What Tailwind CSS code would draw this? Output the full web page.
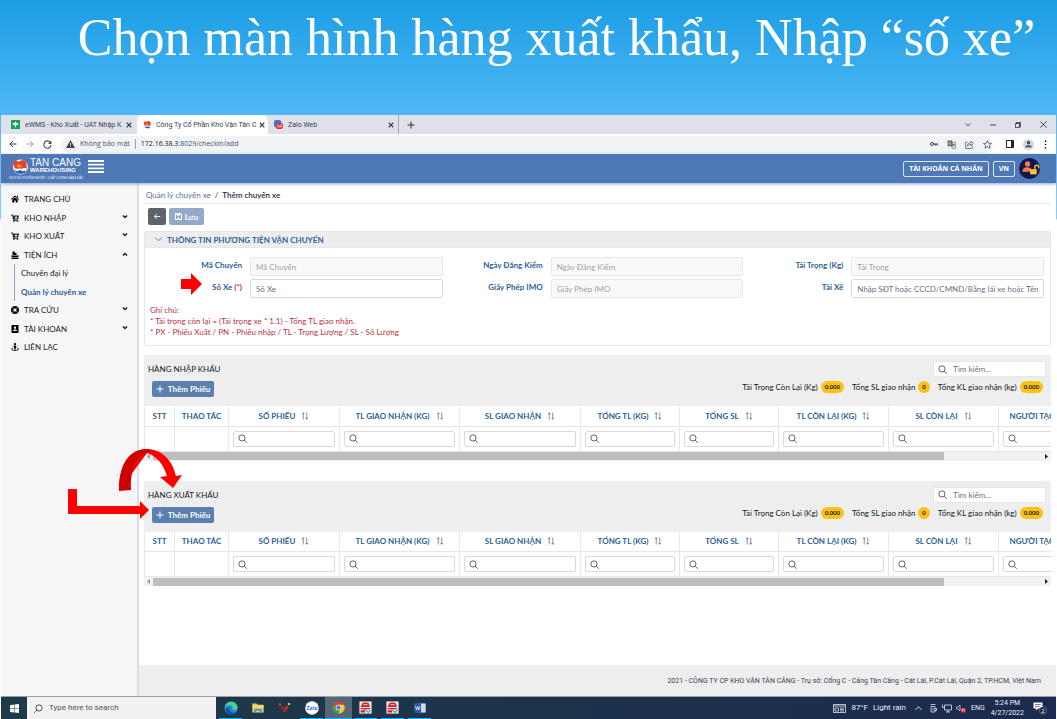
<!DOCTYPE html>
<html lang="vi">
<head>
    <meta charset="UTF-8">
    <meta name="viewport" content="width=device-width, initial-scale=1.0">
    <title>Thêm chuyến xe - Tan Cang Warehousing</title>
    <script src="https://cdn.jsdelivr.net/npm/@tailwindcss/browser@4"></script>
</head>
<body class="bg-white font-[Lato,'Noto_Sans',sans-serif] text-[8px] leading-[10px] text-gray-800">
    <!-- Shared icons -->
    <svg class="hidden">
        <symbol id="search" viewBox="0 0 16 16"><g fill="none" stroke="currentColor" stroke-width="1.6"><circle cx="7" cy="7" r="5.500"/><path d="M11 11 15.500 15.500"/></g></symbol>
        <symbol id="sort" viewBox="0 0 16 16"><path d="M4.5 15V1.500M2 4l2.500-2.500L7 4M11.500 1v13.500M9 12l2.500 2.500L14 12" fill="none" stroke="currentColor" stroke-width="1.300"/></symbol>
        <symbol id="down" viewBox="0 0 16 16"><path d="M2 4l6 6 6-6" fill="none" stroke="currentColor" stroke-width="2.200"/></symbol>
        <symbol id="caret" viewBox="0 0 16 16"><path d="M2.500 4L8 9.500 13.500 4" fill="none" stroke="currentColor" stroke-width="4"/></symbol>
        <symbol id="close" viewBox="0 0 16 16"><path d="M2 2l12 12M14 2L2 14" fill="none" stroke="currentColor" stroke-width="3"/></symbol>
        <symbol id="back" viewBox="0 0 16 16"><path d="M15 8H2M8 2L2 8l6 6" fill="none" stroke="currentColor" stroke-width="2"/></symbol>
        <symbol id="cart" viewBox="0 0 16 16"><path d="M0 1h3.500l.5 2h12l-1.500 8H5.500L6 12.500h8.500V14H4.500L2.500 3H0z" fill="currentColor"/><path d="M9.200 4.500h1.800v1.800h1.800V8H11v1.800H9.200V8H7.400V6.300h1.800z" fill="#f6f6f6"/><circle cx="6" cy="14.500" r="1.500" fill="currentColor"/><circle cx="13" cy="14.500" r="1.500" fill="currentColor"/></symbol>
        <symbol id="brand" viewBox="0 0 32 32"><circle cx="16" cy="17" r="14" fill="#fff"/><path d="M3 21a14 14 0 0 0 26 0l-7 3-6-2-6 3z" fill="#2b62b4"/><path d="M4 23l9-2 8 3 7-1" fill="none" stroke="#fff" stroke-width="1.500"/><path d="M2 9c6-7 9 0 14-4 5-3 9 1 11 4l1 11c-4-3-8 1-12 0-5-1-8 2-11-1z" fill="#e8402f"/><path d="M9 13l4-2 2 3 4-1-2 3 1 2-4-1-3 1z" fill="#f9a51a"/></symbol>
        <symbol id="redapp" viewBox="0 0 32 32"><path d="M1 1h30v30H1z" fill="#f4e4e4"/><path d="M4 15 8 6c3-3 13-3 16 0l3 9z" fill="#d81e28"/><path d="M11 9h10" stroke="#fff" stroke-width="2"/><path d="M4 17h23v3H4zM4 23h11v5H4z" fill="#d81e28"/><path d="M14 20l9 8 5-6" fill="none" stroke="#39a7c9" stroke-width="3"/></symbol>
    </svg>

    <div class="relative min-h-screen flex flex-col bg-[linear-gradient(#1b9de5,#57bcf6_130px,#7fd0fb_219px,#fff_220px)]">
        <h1 class="h-[115px] pl-14 pt-2 text-center font-['Liberation_Serif',serif] text-[52px] leading-[60px] text-white whitespace-nowrap">Chọn màn hình hàng xuất khẩu, Nhập “số xe”</h1>

        <div class="flex-1 mx-px flex flex-col bg-white">
            <!-- Browser tabs -->
            <div class="h-[19px] flex items-center bg-[#dee1e8] font-[Roboto,sans-serif] text-[7px] text-gray-700">
                <div class="w-[136px] h-full pl-[10px] pr-[5px] flex items-center gap-[5px]">
                    <svg class="w-[9px] h-[9px] shrink-0" viewBox="0 0 16 16"><path d="M0 0h16v16H0z" fill="#12a05c"/><path d="M3 7h10M8 3v10" stroke="#fff" stroke-width="2.500"/></svg>
                    <span class="flex-1 min-w-0 whitespace-nowrap">eWMS - Kho Xuất - UAT Nhập K</span>
                    <svg class="w-[6px] h-[6px] shrink-0"><use href="#close"/></svg>
                </div>
                <div class="w-[131px] h-full pl-[6px] pr-[3px] flex items-center gap-1 rounded-t-md bg-white">
                    <svg class="w-[9px] h-[9px] shrink-0"><use href="#brand"/></svg>
                    <span class="flex-1 min-w-0 whitespace-nowrap">Công Ty Cổ Phần Kho Vận Tân C</span>
                    <svg class="w-[6px] h-[6px] shrink-0"><use href="#close"/></svg>
                </div>
                <div class="w-[131px] h-full pl-[6px] pr-1 flex items-center gap-[5px] border-r border-gray-500/50">
                    <svg class="w-[9px] h-[9px] shrink-0" viewBox="0 0 16 16"><rect width="13" height="13" rx="4" fill="#2a7de1"/><rect x="3" y="5" width="13" height="11" rx="5" fill="#e02f2f"/><path d="M6 9h3M11 9h3M6 12h8" stroke="#fff" stroke-width="1.500"/></svg>
                    <span class="flex-1">Zalo Web</span>
                    <svg class="w-[6px] h-[6px] shrink-0"><use href="#close"/></svg>
                </div>
                <svg class="ml-2 w-[8px] h-[8px]" viewBox="0 0 16 16"><path d="M8 1v14M1 8h14" stroke="#333" stroke-width="2"/></svg>
                <div class="ml-auto pr-[9px] flex items-center gap-[19px] text-gray-900">
                    <svg class="w-[6px] h-[6px]"><use href="#down"/></svg>
                    <svg class="w-[6px] h-[6px]" viewBox="0 0 16 16"><path d="M0 8h16" stroke="currentColor" stroke-width="2"/></svg>
                    <svg class="w-[6px] h-[6px]" viewBox="0 0 16 16"><path d="M1 4h11v11H1zM4 4V1h11v11h-3" fill="none" stroke="currentColor" stroke-width="2"/></svg>
                    <svg class="w-[7px] h-[7px]" viewBox="0 0 16 16"><path d="M1 1l14 14M15 1L1 15" stroke="currentColor" stroke-width="1.800"/></svg>
                </div>
            </div>

            <!-- Address bar -->
            <div class="h-[20px] px-2 flex items-center gap-[9px] font-['Open_Sans',sans-serif] text-[7px] text-gray-700">
                <svg class="w-[8px] h-[8px]"><use href="#back"/></svg>
                <svg class="w-[8px] h-[8px] rotate-180 text-gray-400"><use href="#back"/></svg>
                <svg class="w-[9px] h-[9px]" viewBox="0 0 16 16"><path d="M13.500 4.500A6.500 6.500 0 1 0 14.500 9" fill="none" stroke="currentColor" stroke-width="1.800"/><path d="M15 1v6H9z" fill="currentColor"/></svg>
                <div class="flex-1 h-[17px] pl-[5px] pr-px flex items-center rounded-full bg-[#f1f3f4]">
                    <svg class="w-[9px] h-[8px] mr-[5px]" viewBox="0 0 16 14"><path d="M8 0l8 14H0z" fill="#444"/><path d="M8 5v4M8 10.500v1.500" stroke="#fff" stroke-width="1.500"/></svg>
                    <span class="pr-[5px] border-r border-gray-400 text-gray-600">Không bảo mật</span>
                    <span class="pl-[5px] text-gray-600"><span class="text-gray-900">172.16.38.3</span>:8029/checkin/add</span>
                    <span class="ml-auto flex items-center gap-[9px]">
                        <svg class="w-[8px] h-[8px]" viewBox="0 0 16 16"><circle cx="4" cy="8" r="3" fill="none" stroke="currentColor" stroke-width="2"/><path d="M7 8h9M11 8v3M14.500 8v3" stroke="currentColor" stroke-width="2"/></svg>
                        <svg class="w-[9px] h-[9px]" viewBox="0 0 16 16"><path d="M1 1h8l2 10H1z" fill="#666"/><path d="M8 4h7v11H9l-1-4M10 8h4M12 7v1c0 2-1 3-2 4M11 9l3 3" fill="none" stroke="#666" stroke-width="1.200"/><path d="M7 4.500A2 2 0 1 0 7 7H5.500" fill="none" stroke="#fff"/></svg>
                        <svg class="w-[9px] h-[9px]" viewBox="0 0 16 16"><path d="M5 4H1v11h12v-4M4 11c0-4 3-6 7-6V2l4 4.500-4 4V8c-3 0-5 1-7 3z" fill="none" stroke="currentColor" stroke-width="1.200"/></svg>
                        <svg class="w-[9px] h-[9px]" viewBox="0 0 16 16"><path d="M8 1l2.100 4.700 5 .5-3.800 3.300 1.100 5L8 11.900 3.600 14.500l1.100-5L.9 6.200l5-.5z" fill="none" stroke="currentColor" stroke-width="1.300"/></svg>
                    </span>
                </div>
                <svg class="ml-1 w-[8px] h-[8px]" viewBox="0 0 16 16"><path d="M1 1h14v14H1z" fill="none" stroke="#222" stroke-width="2"/><path d="M10 1h5v14h-5z" fill="#222"/></svg>
                <svg class="w-[11px] h-[11px]" viewBox="0 0 16 16"><circle cx="8" cy="8" r="8" fill="#d3d7de"/><circle cx="8" cy="5.500" r="2.500" fill="#3d4a5c"/><path d="M3 12c0-4 10-4 10 0z" fill="#3d4a5c"/></svg>
                <svg class="w-[5px] h-[9px]" viewBox="0 0 8 16"><circle cx="4" cy="2" r="1.400"/><circle cx="4" cy="8" r="1.400"/><circle cx="4" cy="14" r="1.400"/></svg>
            </div>

            <!-- App header -->
            <header class="relative h-[29px] px-2 flex items-center bg-[#4f78b6] text-white shadow-[0_1px_3px_#8fa5cf]">
                <a href="#" class="block w-[74px]">
                    <span class="flex items-center gap-px pl-[3px]">
                        <svg class="w-[17px] h-[17px]"><use href="#brand"/></svg>
                        <span class="block font-['Liberation_Sans',sans-serif]">
                            <span class="block text-[10px] leading-[8px] whitespace-nowrap">TAN CANG</span>
                            <span class="block text-[6px] leading-[7px] font-bold">WAREHOUSING</span>
                        </span>
                    </span>
                    <span class="block pt-px text-[3px] leading-[4px] font-['Open_Sans',sans-serif] whitespace-nowrap">DỊCH VỤ CHUYÊN NGHIỆP - CHẤT LƯỢNG HÀNG ĐẦU</span>
                </a>
                <button class="self-start mt-[6px] ml-[5px]" aria-label="Menu">
                    <svg class="w-[16px] h-[13px]" viewBox="0 0 16 13"><path d="M0 1h16M0 4.700h16M0 8.300h16M0 12h16" stroke="#fff" stroke-width="1.800"/></svg>
                </button>
                <div class="ml-auto pr-2 flex items-center gap-1 font-['Open_Sans',sans-serif] text-[7px]">
                    <button class="h-[16px] px-[5px] border border-white/80 rounded-[2px] font-bold">TÀI KHOẢN CÁ NHÂN</button>
                    <button class="h-[16px] px-[5px] border border-white/80 rounded-[2px] font-bold">VN</button>
                    <svg class="w-[21px] h-[21px]" viewBox="0 0 32 32"><circle cx="16" cy="16" r="16" fill="#12184c"/><circle cx="13" cy="9" r="4" fill="#f47b50"/><path d="M5 21c0-9 15-9 15 0z" fill="#f47b50"/><path d="M17 17h10v8H17z" fill="#fbc53a"/><path d="M24 17v-3c0-4 6-4 6 0v2" fill="none" stroke="#fbc53a" stroke-width="2"/></svg>
                </div>
            </header>

            <div class="flex-1 flex">
                <!-- Sidebar -->
                <nav class="w-[138px] shrink-0 pt-[7px] pl-[10px] pr-[9px] bg-[#f6f6f6] border-r-2 border-[#dcdde8] text-[#222]">
                    <a href="#" class="h-[18px] flex items-center gap-[5px]">
                        <svg class="w-[8px] h-[8px]" viewBox="0 0 16 16"><path d="M8 1l8 7-1 1.500L8 3.500 1 9.500 0 8zM12 1h2v4l-2-2zM2.500 9.500L8 5l5.500 4.500V15H9.500v-4h-3v4h-4z"/></svg>
                        TRANG CHỦ
                    </a>
                    <a href="#" class="h-[19px] flex items-center gap-[5px]">
                        <svg class="w-[8px] h-[8px]"><use href="#cart"/></svg>
                        KHO NHẬP
                        <svg class="ml-auto mb-[2px] w-[6px] h-[6px]"><use href="#caret"/></svg>
                    </a>
                    <a href="#" class="h-[18px] flex items-center gap-[5px]">
                        <svg class="w-[8px] h-[8px]"><use href="#cart"/></svg>
                        KHO XUẤT
                        <svg class="ml-auto mb-[2px] w-[6px] h-[6px]"><use href="#caret"/></svg>
                    </a>
                    <a href="#" class="h-[19px] flex items-center gap-[5px]">
                        <svg class="w-[8px] h-[8px]" viewBox="0 0 16 16"><path d="M3 1h5v3h3v4H3zM0 9h16l-2 4H2zM1 14h14v2H1z"/></svg>
                        TIỆN ÍCH
                        <svg class="ml-auto mb-[2px] w-[6px] h-[6px] rotate-180"><use href="#caret"/></svg>
                    </a>
                    <div class="ml-[3px] pl-[6px] border-l border-gray-400">
                        <a href="#" class="h-[18px] flex items-center">Chuyến đại lý</a>
                        <a href="#" class="h-[19px] flex items-center font-bold text-[#275a93]">Quản lý chuyến xe</a>
                    </div>
                    <a href="#" class="h-[18px] flex items-center gap-[5px]">
                        <svg class="w-[8px] h-[8px]" viewBox="0 0 16 16"><circle cx="8" cy="8" r="5.500" fill="none" stroke="#111" stroke-width="5"/><path d="M3 3l2 2M13 3l-2 2M3 13l2-2M13 13l-2-2" stroke="#f6f6f6" stroke-width="1.500"/></svg>
                        TRA CỨU
                        <svg class="ml-auto mb-[2px] w-[6px] h-[6px]"><use href="#caret"/></svg>
                    </a>
                    <a href="#" class="h-[19px] flex items-center gap-[5px]">
                        <svg class="w-[8px] h-[8px]" viewBox="0 0 16 16"><rect x="1" width="14" height="16" rx="1.500"/><circle cx="8" cy="5.500" r="2.300" fill="#f6f6f6"/><path d="M4 12c0-4 8-4 8 0z" fill="#f6f6f6"/></svg>
                        TÀI KHOẢN
                        <svg class="ml-auto mb-[2px] w-[6px] h-[6px]"><use href="#caret"/></svg>
                    </a>
                    <a href="#" class="h-[18px] flex items-center gap-[5px]">
                        <svg class="w-[8px] h-[8px]" viewBox="0 0 16 16"><circle cx="8" cy="2.200" r="2.200"/><path d="M5.500 5h5v4h-1v4h-3V9h-1z"/><path d="M4 10c-6 2-2 5 4 5s10-3 4-5" fill="none" stroke="#111" stroke-width="1.800"/></svg>
                        LIÊN LẠC
                    </a>
                </nav>

                <main class="flex-1 min-w-0 flex flex-col">
                    <div class="flex-1 pl-[5px] pr-[5px]">
                        <div class="h-[21px] pl-[2px] pt-[7px] flex gap-1 border-b border-gray-200">
                            <a href="#" class="text-[#55708f]">Quản lý chuyến xe</a>
                            <span>/</span>
                            <span class="font-semibold">Thêm chuyến xe</span>
                        </div>
                        <div class="pt-1 pl-1 flex gap-[3px]">
                            <button class="w-[18px] h-[17px] flex items-center justify-center rounded-[2px] bg-[#5d6369] text-white" aria-label="Quay lại">
                                <svg class="w-[8px] h-[7px]"><use href="#back"/></svg>
                            </button>
                            <button class="w-[35px] h-[17px] flex items-center justify-center gap-[3px] rounded-[2px] bg-[#94a9c9] text-white font-bold">
                                <svg class="w-[7px] h-[7px]" viewBox="0 0 16 16"><path d="M1 1h11l3 3v11H1z" fill="none" stroke="#fff" stroke-width="2.500"/><path d="M4 2h7v4H4zM6 10h4v4H6z" fill="#fff"/></svg>
                                Lưu
                            </button>
                        </div>

                        <!-- Vehicle information -->
                        <section class="mt-[6px] h-[115px] border border-gray-200 rounded-[2px]">
                            <h2 class="h-[16px] pl-[10px] flex items-center gap-[5px] bg-[#ededed] border-b border-gray-200 font-bold text-[#2f6095]">
                                <svg class="w-[7px] h-[7px]" viewBox="0 0 16 16"><path d="M1 4l7 7 7-7" fill="none" stroke="currentColor" stroke-width="1.800"/></svg>
                                THÔNG TIN PHƯƠNG TIỆN VẬN CHUYỂN
                            </h2>
                            <div class="grid grid-cols-3 gap-y-[3px] pt-[9px] pl-[3px]">
                                <div class="flex gap-2 pr-[6px]">
                                    <label for="maChuyen" class="w-[94px] pt-[3px] text-right font-bold text-[#2f6095]">Mã Chuyến</label>
                                    <input id="maChuyen" disabled placeholder="Mã Chuyến" class="flex-1 min-w-0 h-[19px] px-[5px] border border-gray-200 rounded-[2px] bg-[#f9f9f9] placeholder:text-gray-400">
                                </div>
                                <div class="flex gap-2 pr-[6px]">
                                    <label for="dangKiem" class="w-[94px] pt-[3px] text-right font-bold text-[#2f6095]">Ngày Đăng Kiểm</label>
                                    <input id="dangKiem" disabled placeholder="Ngày Đăng Kiểm" class="flex-1 min-w-0 h-[19px] px-[5px] border border-gray-200 rounded-[2px] bg-[#f9f9f9] placeholder:text-gray-400">
                                </div>
                                <div class="flex gap-2 pr-[6px]">
                                    <label for="taiTrong" class="w-[94px] pt-[3px] text-right font-bold text-[#2f6095]">Tải Trọng (Kg)</label>
                                    <input id="taiTrong" disabled placeholder="Tải Trọng" class="flex-1 min-w-0 h-[19px] px-[5px] border border-gray-200 rounded-[2px] bg-[#f9f9f9] placeholder:text-gray-400">
                                </div>
                                <div class="flex gap-2 pr-[6px]">
                                    <label for="soXe" class="w-[94px] pt-[3px] text-right font-bold text-[#2f6095]">Số Xe <span class="text-[#c8202f]">(*)</span></label>
                                    <input id="soXe" placeholder="Số Xe" class="flex-1 min-w-0 h-[19px] px-[5px] border border-[#d9dadd] rounded-[2px] placeholder:text-gray-500">
                                </div>
                                <div class="flex gap-2 pr-[6px]">
                                    <label for="imo" class="w-[94px] pt-[3px] text-right font-bold text-[#2f6095]">Giấy Phép IMO</label>
                                    <input id="imo" disabled placeholder="Giấy Phép IMO" class="flex-1 min-w-0 h-[19px] px-[5px] border border-gray-200 rounded-[2px] bg-[#f9f9f9] placeholder:text-gray-400">
                                </div>
                                <div class="flex gap-2 pr-[6px]">
                                    <label for="taiXe" class="w-[94px] pt-[3px] text-right font-bold text-[#2f6095]">Tài Xế</label>
                                    <input id="taiXe" placeholder="Nhập SĐT hoặc CCCD/CMND/Bằng lái xe hoặc Tên" class="flex-1 min-w-0 h-[19px] px-[5px] border border-[#d9dadd] rounded-[2px] placeholder:text-gray-500">
                                </div>
                            </div>
                            <p class="pt-[7px] pl-[5px] leading-[11px] text-[#bd2f3d]">
                                Ghi chú:<br>
                                * Tải trọng còn lại = (Tải trọng xe * 1.1) - Tổng TL giao nhận.<br>
                                * PX - Phiếu Xuất / PN - Phiếu nhập / TL - Trọng Lượng / SL - Số Lượng
                            </p>
                        </section>

                        <div id="cards"></div>
                    </div>

                    <footer class="h-[31px] pr-[15px] flex items-center justify-end bg-[#eee] font-[Roboto,sans-serif] text-[7px] text-gray-700">2021 - CÔNG TY CP KHO VẬN TÂN CẢNG - Trụ sở: Cổng C - Cảng Tân Cảng - Cát Lái, P.Cát Lái, Quận 2, TP.HCM, Việt Nam</footer>
                </main>
            </div>

            <!-- Taskbar -->
            <div class="h-[23px] flex bg-gradient-to-r from-[#1f3b47] to-[#1b2a4e] border-t border-gray-400 font-[Roboto,sans-serif] text-[7px] text-white">
                <button class="w-[26px] flex items-center justify-center" aria-label="Start">
                    <svg class="w-[9px] h-[9px]" viewBox="0 0 16 16"><path d="M0 2l7-1v6.500H0zM8 1l8-1v7.500H8zM0 8.500h7V15l-7-1zM8 8.500h8V16l-8-1z" fill="#fff"/></svg>
                </button>
                <label class="w-[189px] pl-[7px] flex items-center gap-[6px] bg-[#f1f1f1] text-gray-700">
                    <svg class="w-[9px] h-[9px] -scale-x-100"><use href="#search"/></svg>
                    <input placeholder="Type here to search" class="flex-1 min-w-0 text-[8px] placeholder:text-gray-600">
                </label>
                <div class="pl-px flex text-center">
                    <span class="w-[27px] px-[2px]"><span class="h-full flex items-center justify-center border-b border-sky-400">
                        <svg class="w-[14px] h-[14px]" viewBox="0 0 32 32"><circle cx="16" cy="16" r="15" fill="#1b8bd8"/><path d="M2 12C6-2 30-2 31 15c0 7-9 7-12 4 3-5-2-10-8-9-4 0-7 1-9 4z" fill="#4cd08b"/><path d="M12 16c-1 8 7 13 15 10-9 9-21 3-23-4 0-6 5-9 8-6z" fill="#0c56a8"/></svg>
                    </span></span>
                    <span class="w-[27px] flex items-center justify-center">
                        <svg class="w-[12px] h-[12px]" viewBox="0 0 32 32"><path d="M1 4h11l3 3h16v21H1z" fill="#f7ce54"/><path d="M1 11h30v3H1z" fill="#fbe392"/><path d="M6 18h20v10h-5v-5H11v5H6z" fill="#3b9ad8"/></svg>
                    </span>
                    <span class="w-[27px] flex items-center justify-center">
                        <svg class="w-[13px] h-[13px]" viewBox="0 0 32 32"><circle cx="5" cy="6" r="3" fill="#e33b2e"/><circle cx="27" cy="5" r="3" fill="#e8c62e"/><path d="M6 9l9 8L25 8" fill="none" stroke="#5b2a12" stroke-width="4"/><circle cx="11" cy="14" r="4" fill="#8f2a1f"/><circle cx="21" cy="14" r="4" fill="#b7402e"/><circle cx="16" cy="21" r="4" fill="#c9221c"/></svg>
                    </span>
                    <span class="w-[27px] px-[2px]"><span class="h-full flex items-center justify-center border-b border-sky-400">
                        <svg class="w-[14px] h-[14px]" viewBox="0 0 32 32"><circle cx="16" cy="16" r="15.500" fill="#fff"/><text x="16" y="20" text-anchor="middle" font-family="Open Sans, sans-serif" font-weight="700" font-size="12" fill="#1f6fe5">Zalo</text></svg>
                    </span></span>
                    <span class="w-[27px] flex items-center justify-center bg-white/25 border-b border-sky-400">
                        <svg class="w-[13px] h-[13px]" viewBox="0 0 32 32"><circle cx="16" cy="16" r="15" fill="#e33e2f"/><path d="M3 9a15 15 0 0 0 12 22l6-12-10 0z" fill="#2ea650"/><path d="M16 9h13.500A15 15 0 0 1 15 31l7-12z" fill="#fbc916"/><circle cx="16" cy="16" r="7" fill="#fff"/><circle cx="16" cy="16" r="5.500" fill="#3f7fee"/></svg>
                    </span>
                    <span class="w-[27px] px-[2px]"><span class="h-full flex items-center justify-center border-b border-sky-400">
                        <svg class="w-[13px] h-[13px]"><use href="#redapp"/></svg>
                    </span></span>
                    <span class="w-[27px] px-[2px]"><span class="h-full flex items-center justify-center border-b border-sky-400">
                        <svg class="w-[13px] h-[13px]"><use href="#redapp"/></svg>
                    </span></span>
                    <span class="w-[27px] px-[2px]"><span class="h-full flex items-center justify-center border-b border-sky-400">
                        <svg class="w-[12px] h-[12px]" viewBox="0 0 32 32"><path d="M17 4h14v24H17z" fill="#eef3fb"/><path d="M20 9h9M20 14h9M20 19h9M20 24h9" stroke="#7f9fd0" stroke-width="1.500"/><path d="M0 4l19-3v30L0 28z" fill="#2a5aa8"/><path d="M4 11l3 10 3-9 3 9 3-10" fill="none" stroke="#fff" stroke-width="2"/></svg>
                    </span></span>
                </div>
                <div class="ml-auto pr-[9px] flex items-center text-[#eef]">
                    <svg class="w-[13px] h-[9px] mr-[5px]" viewBox="0 0 26 18"><path d="M1 1h24v16H1zM1 4h24M4 8h7v6H4zM14 8h8M14 11h8M14 14h8" fill="none" stroke="currentColor" stroke-width="1.500"/></svg>
                    <span class="text-[8px] mr-[5px]">87°F</span>
                    <span class="text-[8px] mr-[9px]">Light rain</span>
                    <svg class="w-[7px] h-[7px] mr-[7px]" viewBox="0 0 16 16"><path d="M1 11l7-7 7 7" fill="none" stroke="currentColor" stroke-width="2"/></svg>
                    <svg class="w-[8px] h-[9px] mr-[5px]" viewBox="0 0 16 18"><path d="M4 5h8v11H4zM8 8v5M3 1h10M12 9h3v4h-3" fill="none" stroke="currentColor" stroke-width="1.500"/></svg>
                    <svg class="w-[10px] h-[9px] mr-1" viewBox="0 0 20 18"><path d="M5 2h14v10H5zM8 16h8M12 12v4M1 1v6h4" fill="none" stroke="currentColor" stroke-width="1.500"/></svg>
                    <svg class="w-[10px] h-[9px] mr-[5px]" viewBox="0 0 20 18"><path d="M1 6h3l4-4v12l-4-4H1z" fill="none" stroke="currentColor" stroke-width="1.300"/><path d="M10 8h9v9h-9z" fill="#d8323c"/><path d="M12 10l5 5M17 10l-5 5" stroke="#fff" stroke-width="1.300"/></svg>
                    <span class="mr-[6px]">ENG</span>
                    <span class="mr-[9px] text-center">5:24 PM<br>4/27/2022</span>
                    <svg class="w-[14px] h-[14px]" viewBox="0 0 28 28"><path d="M1 3h18v12h-9l-4 4v-4H1z" fill="#fff"/><path d="M4 7h12M4 11h9" stroke="#1b2a4e" stroke-width="1.200"/><circle cx="20" cy="19" r="7.500" fill="#1b2a4e" stroke="#9ab" stroke-width="1"/><text x="20" y="23" text-anchor="middle" font-family="Open Sans, sans-serif" font-size="12" fill="#fff">2</text></svg>
                </div>
            </div>
        </div>

        <!-- Annotation arrows -->
        <svg class="absolute left-[60px] top-[270px] w-[150px] h-[260px] pointer-events-none" viewBox="60 270 150 260" fill="#fe0000">
            <path d="M181 279h10v-6l11 11-11 11v-6h-10z"/>
            <path d="M68 489h9v17h63v-5l9 9-9 9v-5H68z"/>
            <path d="M119 491c0-22 7-41 27-42 15 0 26 10 30 27l6-1-9 13-13-11 7-1c-4-13-11-20-20-23z"/>
            <path d="M119 491c0-22 7-41 27-42l5 2-4 2c-11 4-17 17-16 37z" fill="#d00000"/>
        </svg>
    </div>

    <script>
        // column title, cell width
        const columns = [
            ['SỐ PHIẾU', 'w-[111px]'],
            ['TL GIAO NHẬN (KG)', 'w-[120px]'],
            ['SL GIAO NHẬN', 'w-[121px]'],
            ['TỔNG TL (KG)', 'w-[99px]'],
            ['TỔNG SL', 'w-[99px]'],
            ['TL CÒN LẠI (KG)', 'w-[110px]'],
            ['SL CÒN LẠI', 'w-[110px]'],
            ['NGƯỜI TẠO', 'w-[82px]']
        ];

        const headCells = columns.map(([title, width]) => `
            <th class="${width} border-r border-gray-200">
                <span class="flex items-center justify-center gap-[6px] whitespace-nowrap">${title}
                    <svg class="w-[8px] h-[8px] text-gray-600"><use href="#sort"/></svg>
                </span>
            </th>`).join('');

        const filterCells = columns.map(([title]) => `
            <td class="px-1 border-r border-gray-200">
                <label class="h-[16px] px-1 flex items-center gap-1 border border-[#d9dadd] rounded-[2px] text-gray-600">
                    <svg class="w-[9px] h-[9px] shrink-0"><use href="#search"/></svg>
                    <input aria-label="${title}" class="flex-1 min-w-0">
                </label>
            </td>`).join('');

        document.getElementById('cards').innerHTML = ['HÀNG NHẬP KHẨU', 'HÀNG XUẤT KHẨU'].map((title, i) => `
            <section class="${i === 0 ? 'mt-[9px]' : 'mt-[20px]'}">
                <div class="h-[51px] pt-[6px] pl-1 pr-[5px] flex justify-between bg-[#eee]">
                    <div>
                        <h3 class="pt-[3px] text-gray-900">${title}</h3>
                        <button class="mt-[7px] ml-1 w-[62px] h-[16px] flex items-center justify-center gap-1 rounded-[2px] bg-[#5b80ad] text-white font-bold">
                            <svg class="w-[8px] h-[8px]" viewBox="0 0 16 16"><path d="M8 1v14M1 8h14" stroke="#fff" stroke-width="2"/></svg>
                            Thêm Phiếu
                        </button>
                    </div>
                    <div class="flex flex-col items-end">
                        <label class="w-[113px] h-[16px] px-1 flex items-center gap-[6px] border border-gray-200 bg-white text-gray-600">
                            <svg class="w-[9px] h-[9px] shrink-0"><use href="#search"/></svg>
                            <input placeholder="Tìm kiếm..." aria-label="Tìm kiếm" class="flex-1 min-w-0 placeholder:text-gray-500">
                        </label>
                        <div class="mt-1 pr-[3px] flex gap-2 text-gray-900">
                            <span class="flex items-center gap-[3px]">Tải Trọng Còn Lại (Kg) <b class="px-1 rounded-full bg-[#fbc115] text-[6px] leading-[12px]">0.000</b></span>
                            <span class="flex items-center gap-[3px]">Tổng SL giao nhận <b class="px-1 rounded-full bg-[#fbc115] text-[6px] leading-[12px]">0</b></span>
                            <span class="flex items-center gap-[3px]">Tổng KL giao nhận (kg) <b class="px-1 rounded-full bg-[#fbc115] text-[6px] leading-[12px]">0.000</b></span>
                        </div>
                    </div>
                </div>
                <div class="overflow-hidden">
                    <table class="w-full min-w-[936px] table-fixed border-l border-gray-200">
                        <thead>
                            <tr class="h-[20px] border-b border-gray-200 text-[#2f6095]">
                                <th class="w-[30px] border-r border-gray-200">STT</th>
                                <th class="w-[54px] border-r border-gray-200">THAO TÁC</th>
                                ${headCells}
                            </tr>
                        </thead>
                        <tbody>
                            <tr class="h-[25px] border-b border-gray-200">
                                <td class="border-r border-gray-200"></td>
                                <td class="border-r border-gray-200"></td>
                                ${filterCells}
                            </tr>
                        </tbody>
                    </table>
                </div>
                <div class="h-[9px] flex items-center bg-[#f1f1f1]">
                    <svg class="w-[9px] h-[5px] shrink-0" viewBox="0 0 9 5"><path d="M6 0v5L3 2.500z" fill="#999"/></svg>
                    <div class="flex-1 h-[8px]"><div class="h-full w-[89%] bg-[#bdbdbd]"></div></div>
                    <svg class="w-[9px] h-[5px] shrink-0" viewBox="0 0 9 5"><path d="M3 0v5l3-2.500z" fill="#222"/></svg>
                </div>
            </section>`).join('');
    </script>
</body>
</html>
